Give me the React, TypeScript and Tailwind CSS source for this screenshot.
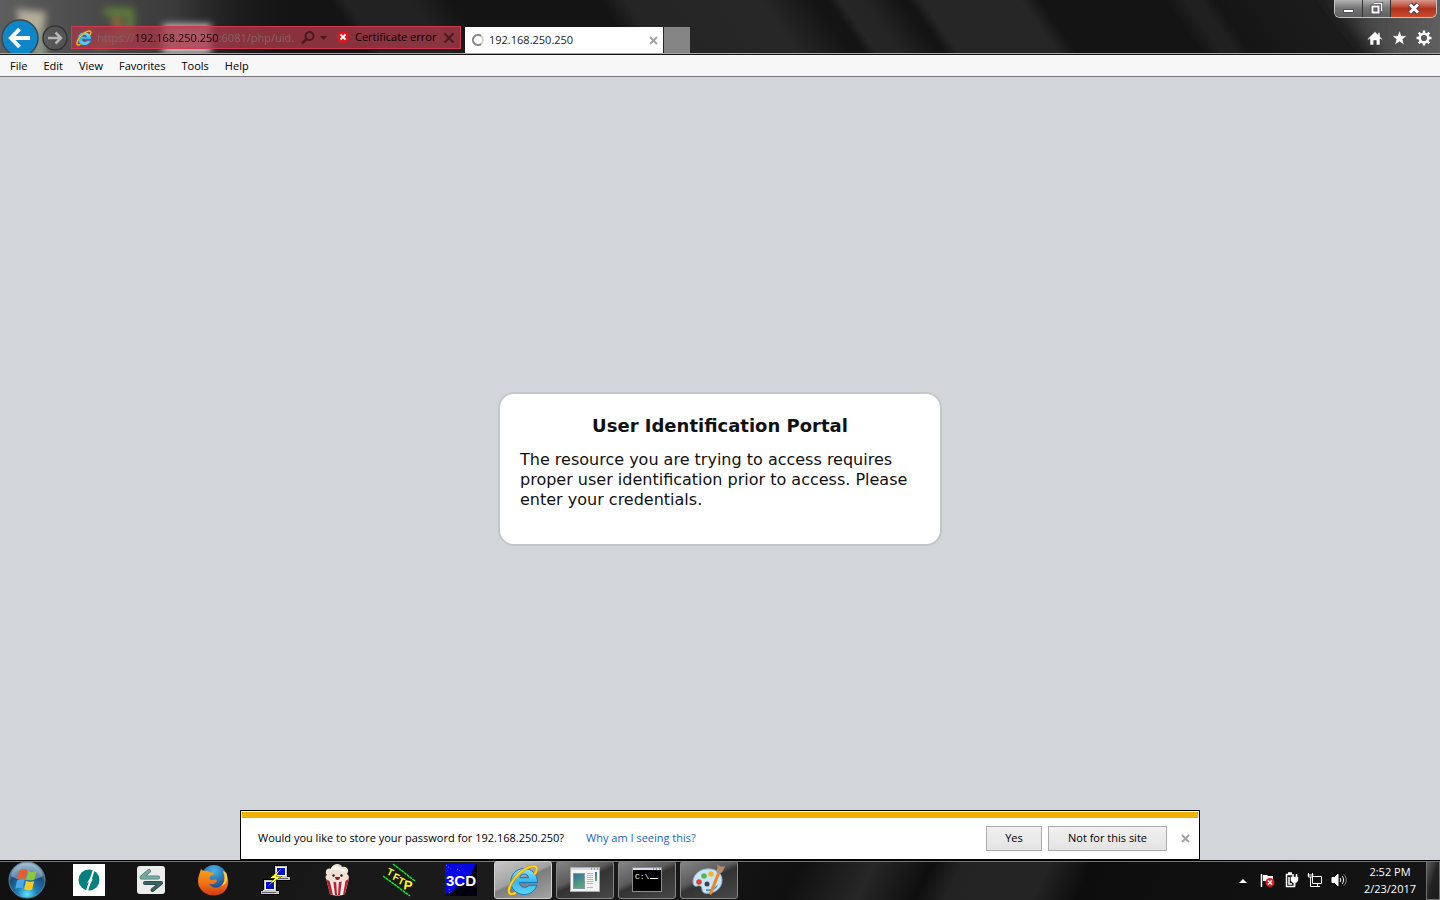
import { useState } from 'react';
import type { ReactNode } from 'react';

const MENU = ['File', 'Edit', 'View', 'Favorites', 'Tools', 'Help'];

function IeLogo({ size, id }: { size: number; id: string }) {
  return (
    <svg width={size} height={size} viewBox="0 0 32 32" className="shrink-0">
      <defs>
        <linearGradient id={`${id}-e`} x1="0" y1="0" x2="0" y2="1">
          <stop offset="0" stopColor="#8fe6ff" />
          <stop offset="0.5" stopColor="#35b5ee" />
          <stop offset="1" stopColor="#5fd8fb" />
        </linearGradient>
      </defs>
      <path
        d="M30.500 18.500H12.500c.2 3 2.200 4.800 5 4.800 2.200 0 3.600-.7 4.400-2.100h8C28.300 26.500 23.500 30.500 17.200 30.500 9.600 30.500 3.800 25 3.800 17.600 3.800 10.300 9.600 4.500 17.200 4.500 25 4.500 30.700 10.600 30.500 18.500zM21.500 13.700c-.3-2.300-2-3.600-4.300-3.600s-4 1.300-4.400 3.600z"
        fill={`url(#${id}-e)`}
        stroke="#1277bd"
        strokeWidth="1"
      />
      <path
        d="M27.500 10.500c3-4.800 3.200-8-.2-8.300C22 1.700 13.500 7 7.500 14.500 2.500 21 .5 27.500 2.800 29.500c1.200 1 3.600.6 6.200-.8"
        fill="none"
        stroke="#c98a08"
        strokeWidth="3"
      />
      <path
        d="M27.500 10.500c3-4.800 3.200-8-.2-8.300C22 1.700 13.500 7 7.500 14.500 2.500 21 .5 27.500 2.800 29.500c1.200 1 3.600.6 6.200-.8"
        fill="none"
        stroke="#fdd422"
        strokeWidth="2"
      />
    </svg>
  );
}

// Dark wallpaper seen through the glass title bar
function TitleGlass() {
  return (
    <svg
      className="absolute inset-0 w-full h-full"
      viewBox="0 0 1440 53"
      preserveAspectRatio="none"
      aria-hidden="true"
    >
      <defs>
        <linearGradient id="glassLeft">
          <stop offset="0" stopColor="#777" stopOpacity="0.75" />
          <stop offset="0.6" stopColor="#555" stopOpacity="0.6" />
          <stop offset="1" stopColor="#222" stopOpacity="0" />
        </linearGradient>
        <linearGradient id="glassRight">
          <stop offset="0" stopColor="#444" stopOpacity="0" />
          <stop offset="0.4" stopColor="#4a4a4a" />
          <stop offset="1" stopColor="#686868" />
        </linearGradient>
        <linearGradient
          id="bands"
          gradientUnits="userSpaceOnUse"
          x1="300"
          x2="1300"
          y1="0"
          y2="0"
          gradientTransform="skewX(35)"
        >
          <stop offset="0" stopColor="#141414" />
          <stop offset="0.030" stopColor="#141414" />
          <stop offset="0.045" stopColor="#222" />
          <stop offset="0.110" stopColor="#222" />
          <stop offset="0.150" stopColor="#141414" />
          <stop offset="0.300" stopColor="#141414" />
          <stop offset="0.325" stopColor="#252525" />
          <stop offset="0.460" stopColor="#272727" />
          <stop offset="0.515" stopColor="#141414" />
          <stop offset="0.528" stopColor="#141414" />
          <stop offset="0.540" stopColor="#262626" />
          <stop offset="0.565" stopColor="#242424" />
          <stop offset="0.600" stopColor="#141414" />
          <stop offset="0.608" stopColor="#141414" />
          <stop offset="0.622" stopColor="#262626" />
          <stop offset="0.720" stopColor="#262626" />
          <stop offset="0.740" stopColor="#141414" />
          <stop offset="0.865" stopColor="#141414" />
          <stop offset="0.885" stopColor="#202020" />
          <stop offset="0.900" stopColor="#202020" />
          <stop offset="0.915" stopColor="#151515" />
          <stop offset="1" stopColor="#1b1b1b" />
        </linearGradient>
        <filter id="soft" x="-20%" y="-50%" width="140%" height="200%">
          <feGaussianBlur stdDeviation="3.500" />
        </filter>
        <filter id="softer" x="-50%" y="-50%" width="200%" height="200%">
          <feGaussianBlur stdDeviation="8" />
        </filter>
      </defs>
      <rect width="1440" height="53" fill="url(#bands)" />
      <rect width="290" height="53" fill="url(#glassLeft)" />
      <path d="M1310 -20h160v100h-70z" fill="url(#glassRight)" filter="url(#softer)" />
      <g filter="url(#soft)">
        <path d="M16 9l30 3-3 22-22-2z" fill="#b3ae98" />
        <path d="M32 30h14v30H32z" fill="#8b9686" />
        <path
          d="M104 12h26v18l-12 8-22 8"
          fill="none"
          stroke="#5b7a3c"
          strokeWidth="9"
          strokeLinejoin="round"
        />
        <circle cx="117" cy="23" r="6" fill="#8a6a3d" />
        <path d="M163 24h48v30h-48z" fill="#c5c0c2" />
      </g>
    </svg>
  );
}

function WindowControls() {
  const glass =
    'h-[17px] flex items-center justify-center bg-linear-to-b from-[#b3b3b3] via-[#737373] via-50% to-[#5f5f5f] border-r border-[#333]';
  return (
    <div className="flex mr-[3px] border border-t-0 border-[#c4c4c4] rounded-b-md overflow-hidden">
      <button aria-label="Minimize" className={`${glass} w-7`}>
        <svg width="13" height="13" viewBox="0 0 13 13">
          <rect x="1.500" y="7.500" width="10" height="3" fill="#fff" stroke="#50515c" />
        </svg>
      </button>
      <button aria-label="Restore" className={`${glass} w-7`}>
        <svg width="13" height="13" viewBox="0 0 13 13">
          <path d="M4 1.500h7.500V9" fill="none" stroke="#4d4e5a" strokeWidth="3" />
          <path d="M4 1.500h7.500V9" fill="none" stroke="#fff" strokeWidth="1.500" />
          <path d="M2.500 4.500h6v6h-6z" fill="none" stroke="#4d4e5a" strokeWidth="4" />
          <path d="M2.500 4.500h6v6h-6z" fill="none" stroke="#fff" strokeWidth="2" />
        </svg>
      </button>
      <button
        aria-label="Close"
        className="h-[17px] w-[45px] flex items-center justify-center bg-linear-to-b from-[#d5988b] via-[#b3311c] via-50% to-[#ca4b2e]"
      >
        <svg width="14" height="13" viewBox="0 0 14 13">
          <path d="M3 2l8 9M11 2l-8 9" stroke="#54424f" strokeWidth="5" />
          <path d="M3 2.500l8 8M11 2.500l-8 8" stroke="#fff" strokeWidth="3" />
        </svg>
      </button>
    </div>
  );
}

function AddressBar() {
  const [url, setUrl] = useState('https://192.168.250.250:6081/php/uid.');
  return (
    <div className="flex items-center w-[390px] h-[23px] mb-1 pl-1 pr-[5px] bg-[#a83848]/80 border border-[#cf3a50]">
      <IeLogo size={16} id="ieSmall" />
      <input
        aria-label="Address"
        value={url}
        onChange={(e) => setUrl(e.target.value)}
        className="ml-[5px] w-[202px] h-5 text-[11px] outline-none text-transparent caret-black bg-clip-text bg-[linear-gradient(90deg,#83636a_38px,#080808_38px,#080808_122px,#83636a_122px)]"
      />
      <button aria-label="Search" className="ml-[2px]">
        <svg width="14" height="14" viewBox="0 0 14 14" fill="none" stroke="#4a1a22" strokeWidth="2">
          <circle cx="8.500" cy="5" r="4" />
          <path d="M5.500 8L1 12.500" strokeWidth="2.500" />
        </svg>
      </button>
      <button aria-label="Show address list" className="ml-[5px]">
        <svg width="8" height="4" viewBox="0 0 8 4">
          <path d="M0 0h7L3.500 4z" fill="#4a1a22" />
        </svg>
      </button>
      <button className="ml-[9px] flex items-center gap-[6px] text-[11px] whitespace-nowrap text-black">
        <svg width="12" height="13" viewBox="0 0 12 13">
          <path d="M6 0l5.500 1.500V8c0 2.500-3 4-5.500 5C3.500 12 .5 10.500.5 8V1.500z" fill="#d8181c" />
          <path d="M3.500 3.500l5 5M8.500 3.500l-5 5" stroke="#fff" strokeWidth="1.800" />
        </svg>
        Certificate error
      </button>
      <button aria-label="Stop" className="ml-auto">
        <svg width="12" height="12" viewBox="0 0 12 12">
          <path d="M1.500 1.500l9 9M10.500 1.500l-9 9" stroke="#4a1a22" strokeWidth="2" />
        </svg>
      </button>
    </div>
  );
}

function TitleBar() {
  return (
    <header className="relative h-[54px] border-b border-[#a8a4a8] overflow-hidden flex justify-between">
      <TitleGlass />
      <div className="relative flex items-end">
        <button aria-label="Back" className="self-end -mb-1 ml-[1px]">
          <svg width="38" height="38" viewBox="0 0 38 38" className="block">
            <circle cx="19" cy="19" r="18" fill="#0d86ca" stroke="#3e474c" strokeWidth="1.500" />
            <path
              d="M29 19H10.500M18.500 10l-8.500 9 8.500 9"
              fill="none"
              stroke="#fff"
              strokeWidth="4"
            />
          </svg>
        </button>
        <button aria-label="Forward" className="mb-[2px] ml-[3px]">
          <svg width="26" height="26" viewBox="0 0 26 26" className="block">
            <circle cx="13" cy="13" r="12" fill="#555" fillOpacity="0.7" stroke="#333" strokeWidth="1.500" />
            <path d="M6 13h13M13.500 7.500l5.500 5.500-5.500 5.500" fill="none" stroke="#b5b5b5" strokeWidth="2.500" />
          </svg>
        </button>
        <div className="w-[3px]" />
        <AddressBar />
        <div className="ml-1 w-[198px] h-[26px] flex items-center pl-[6px] pr-1 bg-white">
          <svg width="14" height="14" viewBox="0 0 14 14" fill="none" strokeWidth="2">
            <circle cx="7" cy="7" r="5" stroke="#d0d0d0" />
            <path d="M10 3A5 5 0 1 0 10 11" stroke="#868686" />
          </svg>
          <span className="ml-1 text-[11px] text-[#222]">192.168.250.250</span>
          <button aria-label="Close tab" className="ml-auto">
            <svg width="11" height="11" viewBox="0 0 11 11">
              <path d="M2 2l7 7M9 2l-7 7" stroke="#a3a3a3" strokeWidth="2" />
            </svg>
          </button>
        </div>
        <button aria-label="New tab" className="ml-px w-[26px] h-[26px] bg-[#858585]" />
      </div>
      <div className="relative flex flex-col items-end">
        <WindowControls />
        <div className="flex gap-2 mt-3 mr-2">
          <button aria-label="Home">
            <svg width="16" height="16" viewBox="0 0 16 16" fill="#fff" stroke="#333" strokeWidth="0.500">
              <path d="M8 1.500L.5 9l1 1L3 8.700V15h3.700v-4.500h2.600V15H13V8.700l1.500 1.300 1-1L13 6.500V2.500h-2v2z" />
            </svg>
          </button>
          <button aria-label="Favorites">
            <svg width="17" height="16" viewBox="0 0 17 16" fill="#fff" stroke="#333" strokeWidth="0.500">
              <path d="M8.500.5l2 5.300H16l-4.300 3.500 1.600 5.700-4.800-3.300L3.700 15l1.600-5.700L1 5.800h5.500z" />
            </svg>
          </button>
          <button aria-label="Tools">
            <svg width="16" height="16" viewBox="0 0 16 16" fill="none" stroke="#fff">
              <circle cx="8" cy="8" r="4.300" strokeWidth="2.400" />
              <path
                d="M8 .5V3M8 13v2.500M.5 8H3M13 8h2.500M2.700 2.700l1.700 1.700M11.600 11.600l1.700 1.700M2.700 13.300l1.700-1.700M11.600 4.400l1.700-1.700"
                strokeWidth="2.400"
              />
            </svg>
          </button>
        </div>
      </div>
    </header>
  );
}

function PasswordPrompt() {
  return (
    <div className="absolute bottom-0 left-1/6 w-2/3 bg-white border border-black p-px text-[11px]">
      <div className="h-[6px] bg-[#f2b000]" />
      <div className="h-10 flex items-center pl-4">
        <span>Would you like to store your password for 192.168.250.250?</span>
        <a href="#why" className="ml-[22px] text-[#1a66c8]">
          Why am I seeing this?
        </a>
        <div className="ml-auto flex items-center gap-[6px]">
          <button className="w-14 h-[25px] border border-[#ababab] bg-linear-to-b from-[#f0f0f0] to-[#e3e3e3]">
            Yes
          </button>
          <button className="w-[119px] h-[25px] border border-[#ababab] bg-linear-to-b from-[#f0f0f0] to-[#e3e3e3]">
            Not for this site
          </button>
          <button aria-label="Dismiss" className="ml-[6px] mr-[6px]">
            <svg width="13" height="11" viewBox="0 0 13 11">
              <path d="M3 2l7 7M10 2l-7 7" stroke="#a3a3a3" strokeWidth="2" />
            </svg>
          </button>
        </div>
      </div>
    </div>
  );
}

function StartOrb() {
  return (
    <svg width="38" height="38" viewBox="0 0 38 38">
      <defs>
        <radialGradient id="orb" cx="0.500" cy="0.900" r="0.900">
          <stop offset="0" stopColor="#5fe2ff" />
          <stop offset="0.300" stopColor="#1b7fb8" />
          <stop offset="0.650" stopColor="#1b4d7c" />
          <stop offset="1" stopColor="#9dbdd0" />
        </radialGradient>
      </defs>
      <circle cx="19" cy="19" r="18" fill="url(#orb)" stroke="#5c8298" />
      <path d="M3 15a16.500 16.500 0 0 1 32 0c-9 5-23 6-32 0z" fill="#c9dfe8" fillOpacity="0.400" />
      <path d="M11.500 9.500c2.500-1.700 5-1.700 7.500-.3L17 18c-2.500-1.200-5-1.200-7.600.3z" fill="#ef5b22" />
      <path d="M20 10c2.500 1.300 5 1.300 8.500 0l-2 8.500c-2.500 1.200-5 1.200-8.200-.2z" fill="#8dc63f" />
      <path d="M9 19.500c2.600-1.500 5-1.500 7.600-.3l-1.900 8.300c-2.400-1.200-5-1.200-7.500.3z" fill="#4aa9e8" />
      <path d="M18 19.800c2.600 1.300 5.200 1.300 8.200.1l-2 8.500c-2.500 1.300-5 1.200-8.100-.2z" fill="#fdc922" />
    </svg>
  );
}

function TealDisc() {
  return (
    <svg width="32" height="32" viewBox="0 0 32 32">
      <rect width="32" height="32" fill="#fff" />
      <circle cx="16" cy="16" r="10.500" fill="#087f7c" />
      <path d="M20.500 3.500L13 27h2l7-22z" fill="#fff" />
      <path d="M17 14l-3 5 2-1-3 9 7-12-2 1z" fill="#fff" />
    </svg>
  );
}

function ArrowsApp() {
  return (
    <svg width="28" height="28" viewBox="0 0 28 28" fill="none" strokeLinecap="round" strokeLinejoin="round">
      <rect width="28" height="28" rx="3" fill="#ececea" />
      <path d="M12 5l-7.500 6.500H21" stroke="#4f7b78" strokeWidth="4" />
      <path d="M12 5l-7.500 6.500H21" stroke="#79aaa4" strokeWidth="2.500" />
      <path d="M8 17h16l-8.500 7" stroke="#2b4b50" strokeWidth="4" />
      <path d="M8 17h16l-8.500 7" stroke="#3b6266" strokeWidth="2.500" />
    </svg>
  );
}

function FirefoxApp() {
  return (
    <svg width="32" height="32" viewBox="0 0 32 32">
      <defs>
        <linearGradient id="fox" x1="0" y1="0" x2="0" y2="1">
          <stop offset="0" stopColor="#f8a51b" />
          <stop offset="0.600" stopColor="#ee6b16" />
          <stop offset="1" stopColor="#d33b10" />
        </linearGradient>
        <radialGradient id="globe" cx="0.500" cy="0.200" r="0.800">
          <stop offset="0" stopColor="#47b4ec" />
          <stop offset="1" stopColor="#123a80" />
        </radialGradient>
      </defs>
      <circle cx="17" cy="14" r="13" fill="url(#globe)" />
      <path
        d="M4 5c1 1 2 2 4 2 2-.5 4 0 5 1.500 2-.5 4 .5 4 1.500-1 1.500-4 1.500-4 3-1 2 0 3 2 3 2-.5 4-1 5 1-1 3-5 4-8 2.500C14 23 18 25 22 23c5-2 7-8 4-15 4 3 6 8 5 12-1 7-7 11.500-14.500 11.500C8 31.500 1 25 1 17c0-5 2-8 3-12z"
        fill="url(#fox)"
      />
      <path d="M26 7c3 6 2 12-2 15 5-1 7-6 6-11-.5-2-2-3.500-4-4z" fill="#fdd13a" />
    </svg>
  );
}

function PuttyApp() {
  return (
    <svg width="32" height="32" viewBox="0 0 32 32" shapeRendering="crispEdges">
      <path d="M15 1h13v11l3 1v3H15v-4z" fill="#c8c8c0" stroke="#000" />
      <path d="M17 3h9v8h-9z" fill="#0010d0" stroke="#fff" />
      <path d="M17 14h12" stroke="#666" />
      <path d="M4 15h13v11l3 1v3H1v-3l3-1z" fill="#c8c8c0" stroke="#000" />
      <path d="M6 17h9v8H6z" fill="#0010d0" stroke="#fff" />
      <path d="M3 28h14" stroke="#666" />
      <path d="M22 5L11 14h5l-7 8 14-10h-6z" fill="#ffff1a" stroke="#4c4c00" strokeWidth="0.500" />
    </svg>
  );
}

function PopcornApp() {
  return (
    <svg width="32" height="32" viewBox="0 0 32 32">
      <path d="M5 14h23l-4 16c-4 2-11 2-15 0z" fill="#f3eeee" />
      <path d="M5 14h3l4 17-3-1zM12 15h3l1 16h-2zM18 15h3l-2 16h-2zM25 14h3l-4 16-2 1z" fill="#bd202d" />
      <path
        d="M5 15c-1-2 0-4 1-4-3-3 0-8 4-6 1-5 9-7 11-2 5-1 8 3 5 7 3 2 2 5 0 6-7 3-16 3-21-1z"
        fill="#efe2d5"
      />
      <path d="M9 6c2-4 8-6 10-1 3-1 5 1 5 3-4-2-10-3-15-2z" fill="#fff8f0" />
      <circle cx="12.500" cy="11.500" r="1.200" fill="#221414" />
      <circle cx="20.500" cy="11.500" r="1.200" fill="#221414" />
      <path d="M14 13h5c0 4-5 4-5 0z" fill="#8c1820" />
    </svg>
  );
}

function TftpApp() {
  return (
    <svg width="36" height="34" viewBox="0 0 36 34">
      <path d="M12 1l22 17M2 13l27 20" stroke="#00f020" strokeWidth="1.500" strokeDasharray="3 0.500" />
      <g fill="#ffff20" fontFamily="Liberation Sans" fontWeight="700">
        <text x="5" y="11" fontSize="10" transform="rotate(25 5 11)">T</text>
        <text x="11" y="16" fontSize="10" transform="rotate(25 11 16)">F</text>
        <text x="16" y="20" fontSize="10" transform="rotate(25 16 20)">T</text>
        <text x="22" y="26" fontSize="13" transform="rotate(10 22 26)">P</text>
      </g>
    </svg>
  );
}

function ThreeCdApp() {
  return (
    <svg width="34" height="32" viewBox="0 0 34 32">
      <rect x="1" width="32" height="32" fill="#000010" />
      <path d="M1 0h31l-3 5-3 7-6 8-8 3-4 5-5 1-2 3z" fill="#0505e8" />
      <path d="M2 1l5 4M13 5l3 2M5 25l1 5" stroke="#8fa0ff" strokeDasharray="1 2" />
      <text x="2" y="22" fontSize="15" fontWeight="700" fill="#fff" fontFamily="Liberation Sans">
        3CD
      </text>
    </svg>
  );
}

function WindowApp() {
  return (
    <svg width="30" height="26" viewBox="0 0 30 26">
      <defs>
        <linearGradient id="pane" x1="0" y1="0" x2="0.400" y2="1">
          <stop offset="0" stopColor="#376ca0" />
          <stop offset="1" stopColor="#58a878" />
        </linearGradient>
      </defs>
      <rect x="0.500" y="0.500" width="29" height="24" fill="#f5f5f5" stroke="#aaa" />
      <path d="M1 1h28v2H1z" fill="#d7dde2" />
      <path d="M21 2h1M24 2h1M27 2h1" stroke="#356080" />
      <rect x="3.500" y="6.500" width="11" height="15" fill="url(#pane)" stroke="#829aa5" />
      <path d="M17 6.500h6M17 8.500h6M17 10.500h6M17 12.500h6M17 14.500h6M17 16.500h6M17 20.500h6" stroke="#b8b8b8" />
      <rect x="25" y="5" width="2" height="9" fill="url(#pane)" />
    </svg>
  );
}

function ConsoleApp() {
  return (
    <svg width="30" height="26" viewBox="0 0 30 26">
      <rect x="0.500" y="0.500" width="29" height="24" fill="#000" stroke="#8d8d8d" />
      <path d="M1 1h28v2H1z" fill="#d7dde2" />
      <path d="M21 2h1M24 2h1M27 2h1" stroke="#356080" />
      <text x="3" y="12" fontSize="8" fill="#fff" fontFamily="Liberation Mono">
        C:\
      </text>
      <path d="M18 11.500h8" stroke="#fff" />
    </svg>
  );
}

function PaintApp() {
  return (
    <svg width="34" height="32" viewBox="0 0 34 32">
      <path
        d="M14 5C6 6 1 12 1 18c0 3 2 5 4 4 3-1 5 0 5 3 0 4 4 5 8 4 7-1 12-6 12-13 0-8-8-12-16-11z"
        fill="#cce6f6"
        stroke="#8ab4d3"
      />
      <circle cx="15" cy="20" r="2.500" fill="#394149" />
      <circle cx="7" cy="18" r="2.800" fill="#db4337" />
      <circle cx="12" cy="12" r="2.800" fill="#55b94d" />
      <circle cx="19" cy="10" r="2.800" fill="#f0b52c" />
      <path d="M14 25c5 1 9-1 12-5-1 5-6 8-12 7z" fill="#3e8fd4" />
      <path d="M25 9l3 1-8 20c-2 2-3 0-2.500-2z" fill="#e78a2b" />
      <path d="M25 0c3 3 6 3 8 2-1 4-3 7-6 8l-3-2c1-2 2-5 1-8z" fill="#b58d6c" />
    </svg>
  );
}

interface TaskItem {
  name: string;
  icon: ReactNode;
  state?: 'open' | 'active';
}

const TASKS: TaskItem[] = [
  { name: 'Teal disc', icon: <TealDisc /> },
  { name: 'Transfer', icon: <ArrowsApp /> },
  { name: 'Firefox', icon: <FirefoxApp /> },
  { name: 'PuTTY', icon: <PuttyApp /> },
  { name: 'Popcorn', icon: <PopcornApp /> },
  { name: 'TFTP', icon: <TftpApp /> },
  { name: '3CD', icon: <ThreeCdApp /> },
  { name: 'Internet Explorer', icon: <IeLogo size={32} id="ieLarge" />, state: 'active' },
  { name: 'Window', icon: <WindowApp />, state: 'open' },
  { name: 'Command Prompt', icon: <ConsoleApp />, state: 'open' },
  { name: 'Paint', icon: <PaintApp />, state: 'open' },
];

function taskClass(state?: TaskItem['state']) {
  if (state === 'active')
    return 'border border-[#cfcfcf] rounded-[3px] bg-[linear-gradient(155deg,#c8c8c8,#a2a2a2_45%,#7d7d7d_50%,#a3a3a3)]';
  if (state === 'open')
    return 'border border-[#858585] rounded-[3px] bg-[linear-gradient(155deg,#858585,#5c5c5c_40%,#333_50%,#484848)]';
  return '';
}

function Tray() {
  return (
    <div className="flex items-center gap-2">
      <button aria-label="Show hidden icons">
        <svg width="8" height="5" viewBox="0 0 8 5">
          <path d="M0 5l4-4 4 4z" fill="#fff" />
        </svg>
      </button>
      <svg width="18" height="16" viewBox="0 0 18 16" className="ml-1">
        <path d="M2.500 2v13" stroke="#fff" strokeWidth="1.500" />
        <path d="M4 3h4l1 1h5v6H9L8 9H4z" fill="#fff" />
        <circle cx="11" cy="10.500" r="4.500" fill="#d82020" />
        <path d="M9 8.500l4 4M13 8.500l-4 4" stroke="#fff" strokeWidth="1.500" />
      </svg>
      <svg width="14" height="16" viewBox="0 0 14 16" fill="none" stroke="#fff" strokeWidth="1.500">
        <path d="M7 2.500H1.500v12h8V12M3 1h4M4 5v7h3" />
        <path d="M6.500 5.500h6v3l-2 2h-2l-2-2z" fill="#fff" />
        <path d="M8 2v4M11.500 2v4M9.500 10v4" />
      </svg>
      <svg width="16" height="16" viewBox="0 0 16 16" fill="none" stroke="#fff">
        <path d="M1.500 1v4h4V1M3.500 5v9.500H9M.5 3h6" />
        <path d="M5.500 4.500h9v7h-9zM8 14.500h5M10.500 12v2" />
      </svg>
      <svg width="17" height="16" viewBox="0 0 17 16" fill="none" stroke="#fff">
        <path d="M1 5.500h2.500L7 2v12l-3.500-3.500H1z" fill="#fff" />
        <path d="M9 6c1 1 1 3 0 4M11 4c2 2 2 6 0 8" />
        <path d="M13 2.500c3 3 3 8 0 11" strokeOpacity="0.500" />
      </svg>
    </div>
  );
}

function Taskbar() {
  return (
    <footer className="h-10 flex border-t border-black bg-[linear-gradient(115deg,#111_0%,#1b1b1b_34%,#161616_48%,#101010_55%,#272727_60%,#0e0e0e_64%,#232323_66%,#242424_72%,#0d0d0d_75%,#151515_100%)]">
      <div className="flex-1 flex pb-px shadow-[inset_0_1px_0_#777]">
        <button aria-label="Start" className="w-[54px] flex items-center justify-center">
          <StartOrb />
        </button>
        <div className="ml-[6px] flex gap-1">
          {TASKS.map((task) => (
            <button
              key={task.name}
              aria-label={task.name}
              className={`w-[58px] flex items-center justify-center ${taskClass(task.state)}`}
            >
              {task.icon}
            </button>
          ))}
        </div>
        <div className="ml-auto flex items-center">
          <Tray />
          <div className="ml-[6px] w-[72px] text-center text-[11px] leading-[17px] text-white">
            <div>2:52 PM</div>
            <div>2/23/2017</div>
          </div>
        </div>
      </div>
      <button
        aria-label="Show desktop"
        className="w-[14px] border border-[#707070] bg-linear-to-br from-[#606060] via-[#222] to-[#1a1a1a]"
      />
    </footer>
  );
}

export default function App() {
  return (
    <div className="min-h-screen flex flex-col bg-[#d2d5da] text-black font-['Open_Sans',sans-serif]">
      <TitleBar />
      <nav className="h-[23px] flex items-center pl-[2px] pt-px bg-[#f7f7f7] border-y border-t-[#161616] border-b-[#777] text-[11px]">
        {MENU.map((item) => (
          <button key={item} className="px-2">
            {item}
          </button>
        ))}
      </nav>

      <main className="relative flex-1 flex items-center justify-center">
        <section className="w-[444px] px-5 pt-5 pb-[34px] bg-white border-2 border-[#c3c7cb] rounded-2xl font-['DejaVu_Sans',sans-serif] text-[#111]">
          <h1 className="text-center text-[18px] leading-6 font-bold">User Identification Portal</h1>
          <p className="mt-3 text-[16px] leading-5">
            The resource you are trying to access requires proper user identification prior to access.
            Please enter your credentials.
          </p>
        </section>
        <PasswordPrompt />
      </main>

      <Taskbar />
    </div>
  );
}
